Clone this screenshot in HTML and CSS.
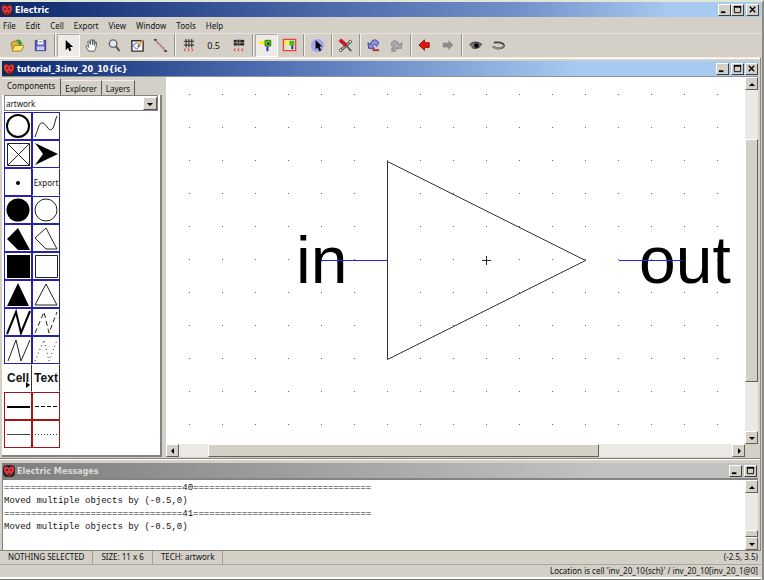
FILE: index.html
```html
<!DOCTYPE html>
<html lang="en">
<head>
    <meta charset="UTF-8">
    <meta name="viewport" content="width=device-width, initial-scale=1.0">
    <title>Electric</title>
    <link rel="stylesheet" href="styles.css">
</head>
<body>
    <svg class="defs" width="0" height="0">
        <symbol id="logo" viewBox="0 0 12 12">
            <rect width="12" height="12" rx="4" fill="#33242c"/>
            <path d="M1 3l2-2 3 2 3-2 2 2v3l-2 3-3 2-3-2-2-3z" fill="#e0343c"/>
            <path d="M3 4h2v2H3zM7 4h2v2H7zM5 8h2v2H5z" fill="#6b2630"/>
        </symbol>
        <symbol id="min" viewBox="0 0 10 10"><path d="M1 8h5" stroke="#000" stroke-width="2"/></symbol>
        <symbol id="max" viewBox="0 0 10 10"><path d="M1.500 2v6.500h7V2" fill="none" stroke="#000"/><path d="M1 2h8" stroke="#000" stroke-width="2"/></symbol>
        <symbol id="close" viewBox="0 0 10 10"><path d="M2 2l6 6M8 2L2 8" stroke="#000" stroke-width="1.500"/></symbol>
        <symbol id="up" viewBox="0 0 10 10"><path d="M2 7l3-3 3 3z"/></symbol>
        <symbol id="down" viewBox="0 0 10 10"><path d="M2 4l3 3 3-3z"/></symbol>
        <symbol id="left" viewBox="0 0 10 10"><path d="M6 2L3 5l3 3z"/></symbol>
        <symbol id="right" viewBox="0 0 10 10"><path d="M4 2l3 3-3 3z"/></symbol>
    </svg>

    <div class="app">
        <header class="titlebar main-title">
            <svg class="logo"><use href="#logo"/></svg>
            <h1>Electric</h1>
            <button class="win-btn" aria-label="Minimize"><svg><use href="#min"/></svg></button>
            <button class="win-btn" aria-label="Maximize"><svg><use href="#max"/></svg></button>
            <button class="win-btn last" aria-label="Close"><svg><use href="#close"/></svg></button>
        </header>

        <nav class="menu">
            <button>File</button>
            <button>Edit</button>
            <button>Cell</button>
            <button>Export</button>
            <button>View</button>
            <button>Window</button>
            <button>Tools</button>
            <button>Help</button>
        </nav>

        <div class="toolbar">
            <button class="tool" aria-label="Open"><svg viewBox="0 0 16 16"><path d="M1 5l4-2 2 1 4 0v4L3 14z" fill="#d9b23c" stroke="#9a7a20"/><path d="M2 14l3-6h10l-3 6z" fill="#ffe27a" stroke="#a88520"/><path d="M6 3c3-3 6-1 6 2h2l-3 3-3-3h2c0-1-2-2-4-2z" fill="#2b9a2b"/></svg></button>
            <button class="tool" aria-label="Save"><svg viewBox="0 0 16 16"><path d="M2.500 2.500h11v11h-11z" fill="#5c62c8" stroke="#34388e"/><path d="M5 2h6v5H5z" fill="#fff"/><path d="M4 9h8v4H4z" fill="#c8cdf4"/><path d="M6 4h4" stroke="#777"/></svg></button>
            <span class="sep"></span>
            <button class="tool pressed" aria-label="Click/Zoom/Wire"><svg viewBox="0 0 16 16"><path d="M5 2v11l2.500-2.500L9 14l2-1-1.500-3.500H13z"/></svg></button>
            <button class="tool" aria-label="Pan"><svg viewBox="0 0 16 16"><path d="M5 14L2 9l1-1 2 2-1-6 1-1 2 4V2h2v5l1-5h1v6l1.500-4 1 1-1 6-1.500 3z" fill="#fff" stroke="#555"/></svg></button>
            <button class="tool" aria-label="Zoom"><svg viewBox="0 0 16 16"><circle cx="6.500" cy="6" r="4" fill="#dcebf4" stroke="#666" stroke-width="1.500"/><path d="M9.500 9l4 5" stroke="#555" stroke-width="2"/></svg></button>
            <button class="tool" aria-label="Outline"><svg viewBox="0 0 16 16"><path d="M2 3h12v11H2z" fill="#fff" stroke="#333" stroke-width="1.500"/><path d="M3 8l4-3 4 3-4 4z" fill="none" stroke="#3a55a0"/><path d="M9 8l5-6" stroke="#e0a020" stroke-width="2"/><path d="M8 9l2-1" stroke="#222"/></svg></button>
            <button class="tool" aria-label="Measure"><svg viewBox="0 0 16 16"><path d="M2 2l12 12" stroke="#8a4a48"/><path d="M4 6l2-2M6 8l2-2M8 10l2-2M10 12l2-2" stroke="#b05050"/><path d="M1 1h3v2H1zM12 13h3v2h-3z" fill="#444"/></svg></button>
            <span class="sep"></span>
            <button class="tool" aria-label="Grid larger"><svg viewBox="0 0 16 16"><path d="M3 3.500h11M3 7.500h11M5.500 1v9M8.500 1v9M11.500 1v9" stroke="#222"/><path d="M3 11l2 1.500L3 14M7 11l2 1.500L7 14M11 11l2 1.500-2 1.500" fill="none" stroke="#e03030"/></svg></button>
            <button class="tool wide">0.5</button>
            <button class="tool" aria-label="Grid smaller"><svg viewBox="0 0 16 16"><path d="M3 2h11v6H3z" fill="#222"/><path d="M6.500 1v7M9.500 1v7M3 5h11" stroke="#999"/><path d="M5 11l-2 1.500L5 14M9 11l-2 1.500L9 14M13 11l-2 1.500 2 1.500" fill="none" stroke="#e03030"/></svg></button>
            <span class="sep"></span>
            <button class="tool pressed" aria-label="Select objects"><svg viewBox="0 0 16 16"><path d="M0 5h6" stroke="#fff200" stroke-width="3"/><path d="M9 9v5" stroke="#2020c0" stroke-width="2"/><path d="M6.500 2.500h6v6h-6z" fill="#58c818" stroke="#2a6a10"/><path d="M9 5h2v2H9z"/></svg></button>
            <button class="tool" aria-label="Select area"><svg viewBox="0 0 16 16"><path d="M1.500 1.500h13v12h-13z" fill="#e8e2c8" stroke="#f04040" stroke-width="1.500"/><path d="M3 5h5" stroke="#fff200" stroke-width="3"/><path d="M8 3h5v5H8z" fill="#38c018"/><path d="M11 8v4" stroke="#2020c0" stroke-width="2"/></svg></button>
            <span class="sep"></span>
            <button class="tool" aria-label="Select special"><svg viewBox="0 0 16 16"><circle cx="8" cy="8" r="7" fill="#a4a4ee"/><path d="M6 2v10l2-2 2 4 2-1-2-4h3z"/></svg></button>
            <span class="sep"></span>
            <button class="tool" aria-label="Preferences"><svg viewBox="0 0 16 16"><path d="M3 13l9-8" stroke="#444" stroke-width="3"/><path d="M3 13l9-8" stroke="#fff"/><circle cx="13" cy="4" r="1.500" fill="#fff" stroke="#444"/><circle cx="3" cy="13" r="1.500" fill="#fff" stroke="#444"/><path d="M2 2l7 6" stroke="#c81820" stroke-width="4"/><path d="M9 8l5 6" stroke="#555" stroke-width="2"/></svg></button>
            <span class="sep"></span>
            <button class="tool" aria-label="Undo"><svg viewBox="0 0 16 16"><path d="M2 5l1 6h6L7 9c1-3 3-3 4 0 4-3 2-7-2-7-2 0-4 2-4 5z" fill="#8c94dc" stroke="#303a98"/><path d="M7 13h7" stroke="#c02030" stroke-width="2"/></svg></button>
            <button class="tool" aria-label="Redo"><svg viewBox="0 0 16 16"><path d="M14 5l-1 6H8l2-2c-1-3-3-3-4-1l2 3-1 3H3v-3h2C1 8 2 3 6 3c3 0 4 2 5 4z" fill="#aaa" stroke="#858585"/></svg></button>
            <span class="sep"></span>
            <button class="tool" aria-label="Go back"><svg viewBox="0 0 16 16"><path d="M2 7.500L8 2v3h5v5H8v3z" fill="#f01010" stroke="#801818"/></svg></button>
            <button class="tool" aria-label="Go forward"><svg viewBox="0 0 16 16"><path d="M14 7.500L9 2v3H3v5h6v3z" fill="#8b8b8b"/></svg></button>
            <span class="sep"></span>
            <button class="tool" aria-label="Expand cell"><svg viewBox="0 0 16 16"><path d="M1 7c4-4 10-4 14 0-3 5-9 5-12 2z" fill="#777"/><path d="M2 7c4-4 9-3 13 0M4 10c3 2 7 1 9-1" fill="none" stroke="#333"/><circle cx="9" cy="8" r="2.500"/></svg></button>
            <button class="tool" aria-label="Unexpand cell"><svg viewBox="0 0 16 16"><path d="M3 5c5-1 10 0 11 3-1 4-8 4-12 1" fill="none" stroke="#444" stroke-width="2"/><path d="M2 9c4 3 9 3 12-1" fill="none" stroke="#888" stroke-width="2"/></svg></button>
        </div>

        <main class="desktop">
            <section class="window edit-window">
                <header class="titlebar cell-title">
                    <svg class="logo"><use href="#logo"/></svg>
                    <h2>tutorial_3:inv_20_10{ic}</h2>
                    <button class="win-btn" aria-label="Minimize"><svg><use href="#min"/></svg></button>
                    <button class="win-btn last" aria-label="Maximize"><svg><use href="#max"/></svg></button>
                    <button class="win-btn" aria-label="Close"><svg><use href="#close"/></svg></button>
                </header>
                <div class="edit-body">
                    <aside class="side">
                        <div class="tabs">
                            <button class="tab active">Components</button>
                            <button class="tab">Explorer</button>
                            <button class="tab">Layers</button>
                        </div>
                        <div class="side-body">
                            <div class="combo">
                                <select aria-label="Technology"><option>artwork</option></select>
                                <span class="combo-arrow"><svg><use href="#down"/></svg></span>
                            </div>
                            <div class="palette">
                                <button aria-label="Thick circle"><svg viewBox="0 0 26 26"><circle cx="13" cy="13" r="11" fill="none" stroke="#000" stroke-width="2"/></svg></button>
                                <button aria-label="Spline"><svg viewBox="0 0 26 26"><path d="M2 24C6 14 6 9 10 10s6 11 10 5c2-4 2-8 4-12" class="thin"/></svg></button>
                                <button aria-label="Crossed box"><svg viewBox="0 0 26 26"><path d="M2.500 2.500h22v22h-22zM3 3l21 21M24 3L3 24" class="thin"/></svg></button>
                                <button aria-label="Arrow"><svg viewBox="0 0 26 26"><path d="M2 2l23 11L2 24l8-11z"/></svg></button>
                                <button aria-label="Pin"><svg viewBox="0 0 26 26"><circle cx="13" cy="14" r="2"/></svg></button>
                                <button class="plain">Export</button>
                                <button aria-label="Filled circle"><svg viewBox="0 0 26 26"><circle cx="13" cy="13" r="11.500"/></svg></button>
                                <button aria-label="Circle"><svg viewBox="0 0 26 26"><circle cx="13" cy="13" r="11" class="thin"/></svg></button>
                                <button aria-label="Filled polygon"><svg viewBox="0 0 26 26"><path d="M13 3l12 22H13L2 14z"/></svg></button>
                                <button aria-label="Open polygon"><svg viewBox="0 0 26 26"><path d="M13 3l11 21H13L2 13z" class="thin"/></svg></button>
                                <button aria-label="Filled box"><svg viewBox="0 0 26 26"><path d="M2 2h23v23H2z"/></svg></button>
                                <button aria-label="Box"><svg viewBox="0 0 26 26"><path d="M2.500 2.500h22v22h-22z" class="thin"/></svg></button>
                                <button aria-label="Filled triangle"><svg viewBox="0 0 26 26"><path d="M13 2l11 23H2z"/></svg></button>
                                <button aria-label="Triangle"><svg viewBox="0 0 26 26"><path d="M13 3l11 21H2z" class="thin"/></svg></button>
                                <button aria-label="Thick line"><svg viewBox="0 0 26 26"><path d="M2 25l9-22 5 21 9-22" fill="none" stroke="#000" stroke-width="2"/></svg></button>
                                <button aria-label="Dashed line"><svg viewBox="0 0 26 26"><path d="M2 24l9-21 5 21 8-21" class="thin dash"/></svg></button>
                                <button aria-label="Line"><svg viewBox="0 0 26 26"><path d="M3 24l8-21 5 21 9-21" class="thin"/></svg></button>
                                <button aria-label="Dotted line"><svg viewBox="0 0 26 26"><path d="M2 24l9-21 5 21 8-21" class="thin dots"/></svg></button>
                                <button class="big">Cell<svg class="more" viewBox="0 0 4 6"><path d="M0 0l4 3-4 3z"/></svg></button>
                                <button class="big">Text</button>
                                <button class="arc" aria-label="Thick arc"><svg viewBox="0 0 26 26"><path d="M2 14h23" stroke="#000" stroke-width="2"/></svg></button>
                                <button class="arc" aria-label="Dashed arc"><svg viewBox="0 0 26 26"><path d="M2 13.500h22" stroke="#000" stroke-dasharray="4 2"/></svg></button>
                                <button class="arc" aria-label="Solid arc"><svg viewBox="0 0 26 26"><path d="M2 13.500h23" stroke="#444"/></svg></button>
                                <button class="arc" aria-label="Dotted arc"><svg viewBox="0 0 26 26"><path d="M2 13.500h23" stroke="#333" stroke-dasharray="1 2"/></svg></button>
                            </div>
                        </div>
                    </aside>

                    <div class="view">
                        <svg class="canvas" viewBox="0 0 579 367" preserveAspectRatio="xMidYMid slice">
                            <defs>
                                <pattern id="grid" x="23" y="17" width="33" height="33" patternUnits="userSpaceOnUse">
                                    <rect width="1" height="1" fill="#666"/>
                                </pattern>
                            </defs>
                            <rect width="580" height="367" fill="#fff"/>
                            <rect x="20" y="14" width="540" height="340" fill="url(#grid)"/>
                            <text x="130" y="206" class="port">in</text>
                            <text x="473" y="206" class="port">out</text>
                            <path d="M155 183.500h66M453 183.500h64" class="wire"/>
                            <path d="M221.500 84.500l198 99-198 99z" fill="none" stroke="#333"/>
                            <path d="M316 183.500h9M320.500 179v9" stroke="#222"/>
                        </svg>
                        <div class="scroll vert">
                            <button aria-label="Scroll up"><svg><use href="#up"/></svg></button>
                            <div class="track cell-v"><div class="thumb"></div></div>
                            <button aria-label="Scroll down"><svg><use href="#down"/></svg></button>
                        </div>
                        <div class="scroll horiz">
                            <button aria-label="Scroll left"><svg><use href="#left"/></svg></button>
                            <div class="track cell-h"><div class="thumb"></div></div>
                            <button aria-label="Scroll right"><svg><use href="#right"/></svg></button>
                        </div>
                        <div class="corner"></div>
                    </div>
                </div>
            </section>

            <section class="window msg-window">
                <header class="titlebar msg-title">
                    <svg class="logo"><use href="#logo"/></svg>
                    <h2>Electric Messages</h2>
                    <button class="win-btn" aria-label="Minimize"><svg><use href="#min"/></svg></button>
                    <button class="win-btn last" aria-label="Maximize"><svg><use href="#max"/></svg></button>
                </header>
                <div class="msg-body">
                    <pre class="log">=================================40=================================
Moved multiple objects by (-0.5,0)
=================================41=================================
Moved multiple objects by (-0.5,0)</pre>
                    <div class="scroll vert">
                        <button aria-label="Scroll up"><svg><use href="#up"/></svg></button>
                        <div class="track msg-v"><div class="thumb"></div></div>
                        <button aria-label="Scroll down"><svg><use href="#down"/></svg></button>
                    </div>
                </div>
            </section>
        </main>

        <footer class="status">
            <div class="status-row">
                <span class="cell">NOTHING SELECTED</span>
                <span class="cell">SIZE: 11 x 6</span>
                <span class="cell">TECH: artwork</span>
                <span class="end">(-2.5, 3.5)</span>
            </div>
            <div class="status-row">
                <span class="end">Location is cell 'inv_20_10{sch}' / inv_20_10[inv_20_1@0]</span>
            </div>
        </footer>
    </div>
</body>
</html>
```
FILE: styles.css
```css
* {
    box-sizing: border-box;
}
body {
    margin: 0;
    background: #d4d0c8;
    color: #111;
    font-family: "Noto Sans", "Open Sans", sans-serif;
    font-size: 8px;
}
button {
    margin: 0;
    padding: 0;
    border: 0;
    background: none;
    color: inherit;
    font: inherit;
}
svg {
    display: block;
}
.defs {
    position: absolute;
}
.app {
    display: flex;
    flex-direction: column;
    height: 100vh;
    padding: 0 1px 1px 0;
    border-top: 2px solid #e2e6d4;
    border-right: 2px solid #8c8a84;
}

/* title bars */
.titlebar {
    display: flex;
    flex: none;
    align-items: center;
    height: 15px;
    color: #fff;
}
.titlebar h1,
.titlebar h2 {
    flex: 1;
    margin: 0;
    padding-left: 2px;
    font-family: "DejaVu Sans Condensed", "DejaVu Sans", sans-serif;
    font-size: 9px;
    line-height: 14px;
    white-space: nowrap;
}
.logo {
    width: 12px;
    height: 12px;
}
.main-title {
    padding: 0 2px 0 1px;
    background: linear-gradient(to right, #0c286c, #3d5c9d 34%, #7191ca 68%, #a6caf0 88%);
}
.cell-title {
    padding: 0 0 0 1px;
    background: linear-gradient(to right, #0c286c, #4b6bb0 34%, #a6caf0 76%);
}
.msg-title {
    padding: 0 1px;
    color: #dcdad4;
    background: linear-gradient(to right, #7e7e7e, #c2c2c2 80%);
}
.win-btn {
    display: flex;
    align-items: center;
    justify-content: center;
    width: 13px;
    height: 12px;
    background: #d4d0c8;
    border: 1px solid;
    border-color: #fff #404040 #404040 #fff;
}
.win-btn svg {
    width: 9px;
    height: 9px;
}
.win-btn.last {
    margin-left: 2px;
}
.cell-title .last {
    margin-right: 1px;
}

/* menu and toolbar */
.menu {
    display: flex;
    flex: none;
    gap: 10px;
    height: 17px;
    padding: 0 3px;
    border-bottom: 1px solid #e6e3dc;
}
.toolbar {
    display: flex;
    flex: none;
    height: 23px;
    padding-left: 6px;
}
.tool {
    display: flex;
    align-items: center;
    justify-content: center;
    width: 23px;
    height: 23px;
}
.tool svg {
    width: 15px;
    height: 15px;
}
.tool.wide {
    width: 27px;
    font-size: 9px;
}
.tool.pressed {
    background: #ecebe7;
    border: 1px solid;
    border-color: #aaa #fff #fff #aaa;
}
.sep {
    width: 5px;
    height: 22px;
    background: linear-gradient(to right, transparent 2px, #96938c 2px, #96938c 3px, #f4f2ee 3px, #f4f2ee 4px, transparent 4px);
}

/* inner windows */
.desktop {
    display: flex;
    flex: 1;
    flex-direction: column;
    min-height: 0;
    border-top: 1px solid #f3e9da;
    border-right: 1px solid #8a8781;
}
.window {
    display: flex;
    flex-direction: column;
    padding: 2px 2px 0;
    border-top: 1px solid #fff;
    border-bottom: 1px solid #85827c;
}
.edit-window {
    flex: 1;
    min-height: 0;
}
.edit-body {
    display: flex;
    flex: 1;
    min-height: 0;
    padding-bottom: 1px;
    border-top: 1px solid #8f9199;
}
.side {
    display: flex;
    flex: none;
    flex-direction: column;
    width: 160px;
    margin-right: 4px;
}
.tabs {
    display: flex;
    align-items: flex-end;
    height: 18px;
}
.tab {
    height: 15px;
    padding: 0 4px;
    border-right: 1px solid #5c5a55;
    border-top: 1px solid #f0eeea;
}
.tab.active {
    height: 17px;
    padding: 0 5px 3px;
}
.side-body {
    flex: 1;
    min-height: 0;
    padding: 0 1px 0 2px;
    background: #fff;
    border-right: 2px solid #85837d;
    border-bottom: 2px solid #85837d;
}
.combo {
    position: relative;
    height: 16px;
    margin-right: 1px;
}
.combo select {
    width: 100%;
    height: 16px;
    padding: 0 1px;
    appearance: none;
    background: #fff;
    border: 1px solid #85837d;
    border-radius: 0;
    color: #111;
    font: inherit;
}
.combo-arrow {
    position: absolute;
    top: 2px;
    right: 1px;
    display: flex;
    align-items: center;
    justify-content: center;
    width: 14px;
    height: 13px;
    background: #d4d0c8;
    border: 1px solid;
    border-color: #fff #55534e #55534e #fff;
    pointer-events: none;
}
.combo-arrow svg {
    width: 10px;
    height: 10px;
}
.palette {
    display: grid;
    grid-template-columns: 28px 28px;
    grid-auto-rows: 28px;
    margin-top: 1px;
}
.palette button {
    position: relative;
    background: #fff;
    border: 1px solid #2424a8;
    overflow: hidden;
}
.palette .arc {
    border-color: #a01818;
}
.palette .plain {
    border-color: #fff #2424a8 #fff #2424a8;
}
.palette .big {
    border-color: #fff #333 #fff #fff;
    font-family: "Liberation Sans", Arial, sans-serif;
    font-size: 12px;
    font-weight: bold;
}
.palette .more {
    position: absolute;
    right: 1px;
    bottom: 3px;
    width: 4px;
    height: 6px;
}
.thin {
    fill: none;
    stroke: #222;
}
.dash {
    stroke-dasharray: 5 3;
}
.dots {
    stroke-dasharray: 1 3;
}

/* drawing area */
.view {
    display: grid;
    flex: 1;
    grid-template-columns: 1fr 13px;
    grid-template-rows: 1fr 13px;
    min-width: 0;
    min-height: 0;
}
.canvas {
    width: 100%;
    height: 100%;
    min-height: 0;
    background: #fff;
}
.port {
    font-family: "Liberation Sans", Arial, sans-serif;
    font-size: 66px;
}
.wire {
    stroke: #2424f0;
}
.corner {
    background: #d4d0c8;
}

/* scroll bars */
.scroll {
    display: flex;
    min-height: 0;
    background: #ebe9e5;
}
.scroll.vert {
    flex-direction: column;
    width: 13px;
}
.scroll button {
    display: flex;
    flex: none;
    align-items: center;
    justify-content: center;
    width: 13px;
    height: 13px;
    background: #d4d0c8;
    border: 1px solid;
    border-color: #fff #605e59 #605e59 #fff;
}
.scroll button svg {
    width: 10px;
    height: 10px;
}
.track {
    display: flex;
    flex: 1;
    min-height: 0;
}
.vert .track {
    flex-direction: column;
}
.thumb {
    flex: 1;
    background: #d4d0c8;
    border: 1px solid;
    border-color: #fff #605e59 #605e59 #fff;
}
.cell-v {
    padding: 49px 0;
}
.cell-h {
    padding: 0 23% 0 5%;
}
.msg-v {
    padding-top: 37px;
}

/* messages */
.msg-window {
    flex: none;
    height: 92px;
    padding-top: 3px;
}
.msg-body {
    display: flex;
    flex: 1;
    min-height: 0;
    border-top: 2px solid #85837d;
    border-left: 1px solid #85837d;
}
.log {
    flex: 1;
    margin: 0;
    padding: 2px 1px;
    background: #fff;
    font-family: "Liberation Mono", "Courier New", monospace;
    font-size: 9px;
    line-height: 13px;
}

/* status bar */
.status {
    flex: none;
    border-bottom: 2px solid #fff;
    box-shadow: 0 1px #77756f;
}
.status-row {
    display: flex;
    height: 13px;
    line-height: 12px;
    white-space: nowrap;
}
.status-row + .status-row {
    border-top: 1px solid #aaa7a0;
}
.cell {
    padding: 0 8px;
    border-right: 1px solid #a09d96;
}
.end {
    margin-left: auto;
    padding-right: 3px;
}
```
